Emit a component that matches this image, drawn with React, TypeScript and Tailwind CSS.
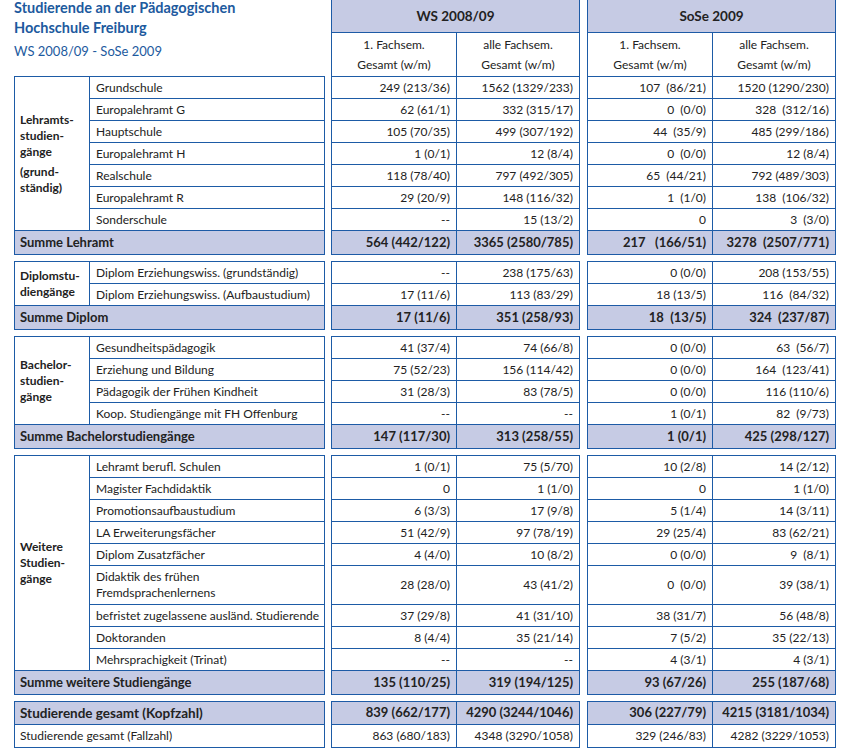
import React from 'react';

type Vals = [string, string, string, string];
type Row = { name: React.ReactNode; v: Vals; tall?: boolean };
type Block = { label: React.ReactNode; rows: Row[]; sum: { name: string; v: Vals } };

const blocks: Block[] = [
  {
    label: (
      <>
        <div>Lehramts-</div>
        <div>studien-</div>
        <div>gänge</div>
        <div className="mt-[4px]">(grund-</div>
        <div>ständig)</div>
      </>
    ),
    rows: [
      { name: 'Grundschule', v: ['249 (213/36)', '1562 (1329/233)', '107  (86/21)', '1520 (1290/230)'] },
      { name: 'Europalehramt G', v: ['62 (61/1)', '332 (315/17)', '0  (0/0)', '328  (312/16)'] },
      { name: 'Hauptschule', v: ['105 (70/35)', '499 (307/192)', '44  (35/9)', '485 (299/186)'] },
      { name: 'Europalehramt H', v: ['1 (0/1)', '12 (8/4)', '0  (0/0)', '12 (8/4)'] },
      { name: 'Realschule', v: ['118 (78/40)', '797 (492/305)', '65  (44/21)', '792 (489/303)'] },
      { name: 'Europalehramt R', v: ['29 (20/9)', '148 (116/32)', '1  (1/0)', '138  (106/32)'] },
      { name: 'Sonderschule', v: ['--', '15 (13/2)', '0', '3  (3/0)'] },
    ],
    sum: { name: 'Summe Lehramt', v: ['564 (442/122)', '3365 (2580/785)', '217   (166/51)', '3278  (2507/771)'] },
  },
  {
    label: (
      <>
        <div>Diplomstu-</div>
        <div>diengänge</div>
      </>
    ),
    rows: [
      { name: 'Diplom Erziehungswiss. (grundständig)', v: ['--', '238 (175/63)', '0 (0/0)', '208 (153/55)'] },
      { name: 'Diplom Erziehungswiss. (Aufbaustudium)', v: ['17 (11/6)', '113 (83/29)', '18 (13/5)', '116  (84/32)'] },
    ],
    sum: { name: 'Summe Diplom', v: ['17 (11/6)', '351 (258/93)', '18  (13/5)', '324  (237/87)'] },
  },
  {
    label: (
      <>
        <div>Bachelor-</div>
        <div>studien-</div>
        <div>gänge</div>
      </>
    ),
    rows: [
      { name: 'Gesundheitspädagogik', v: ['41 (37/4)', '74 (66/8)', '0 (0/0)', '63  (56/7)'] },
      { name: 'Erziehung und Bildung', v: ['75 (52/23)', '156 (114/42)', '0 (0/0)', '164  (123/41)'] },
      { name: 'Pädagogik der Frühen Kindheit', v: ['31 (28/3)', '83 (78/5)', '0 (0/0)', '116 (110/6)'] },
      { name: 'Koop. Studiengänge mit FH Offenburg', v: ['--', '--', '1 (0/1)', '82  (9/73)'] },
    ],
    sum: { name: 'Summe Bachelorstudiengänge', v: ['147 (117/30)', '313 (258/55)', '1 (0/1)', '425 (298/127)'] },
  },
  {
    label: (
      <>
        <div>Weitere</div>
        <div>Studien-</div>
        <div>gänge</div>
      </>
    ),
    rows: [
      { name: 'Lehramt berufl. Schulen', v: ['1 (0/1)', '75 (5/70)', '10 (2/8)', '14 (2/12)'] },
      { name: 'Magister Fachdidaktik', v: ['0', '1 (1/0)', '0', '1 (1/0)'] },
      { name: 'Promotionsaufbaustudium', v: ['6 (3/3)', '17 (9/8)', '5 (1/4)', '14 (3/11)'] },
      { name: 'LA Erweiterungsfächer', v: ['51 (42/9)', '97 (78/19)', '29 (25/4)', '83 (62/21)'] },
      { name: 'Diplom Zusatzfächer', v: ['4 (4/0)', '10 (8/2)', '0 (0/0)', '9  (8/1)'] },
      {
        name: (
          <>
            Didaktik des frühen
            <br />
            Fremdsprachenlernens
          </>
        ),
        v: ['28 (28/0)', '43 (41/2)', '0  (0/0)', '39 (38/1)'],
        tall: true,
      },
      { name: 'befristet zugelassene ausländ. Studierende', v: ['37 (29/8)', '41 (31/10)', '38 (31/7)', '56 (48/8)'] },
      { name: 'Doktoranden', v: ['8 (4/4)', '35 (21/14)', '7 (5/2)', '35 (22/13)'] },
      { name: 'Mehrsprachigkeit (Trinat)', v: ['--', '--', '4 (3/1)', '4 (3/1)'] },
    ],
    sum: { name: 'Summe weitere Studiengänge', v: ['135 (110/25)', '319 (194/125)', '93 (67/26)', '255 (187/68)'] },
  },
];

const rowH = (tall?: boolean) => (tall ? 'h-[39px]' : 'h-[22px]');

function NumCells({ a, b, bold, bg, h }: { a: string; b: string; bold?: boolean; bg?: boolean; h: string }) {
  return (
    <div className={`flex border-t border-[#1d5ba6] ${h} ${bg ? 'bg-[#c6cbe4]' : ''} ${bold ? 'font-bold text-[13px]' : ''}`}>
      <div className="w-[125px] border-r border-[#1d5ba6] flex items-center justify-end pr-[6px] whitespace-pre">{a}</div>
      <div className="flex-1 flex items-center justify-end pr-[6px] whitespace-pre">{b}</div>
    </div>
  );
}

function NumBox({ block, half, header }: { block: Block; half: 0 | 1; header?: React.ReactNode }) {
  const i = half * 2;
  return (
    <div className="w-[249px] border-x border-b border-[#1d5ba6]">
      {header}
      {block.rows.map((r, k) => (
        <NumCells key={k} a={r.v[i]} b={r.v[i + 1]} h={rowH(r.tall)} />
      ))}
      <NumCells a={block.sum.v[i]} b={block.sum.v[i + 1]} bold bg h="h-[24px]" />
    </div>
  );
}

function Header({ title }: { title: string }) {
  return (
    <>
      <div className="h-[32px] bg-[#c6cbe4] flex items-center justify-center font-bold text-[13.5px]">{title}</div>
      <div className="h-[44px] border-t border-[#1d5ba6] flex">
        <div className="w-[125px] border-r border-[#1d5ba6] flex flex-col items-center justify-center leading-[20px]">
          <div>1. Fachsem.</div>
          <div>Gesamt (w/m)</div>
        </div>
        <div className="flex-1 flex flex-col items-center justify-center leading-[20px]">
          <div>alle Fachsem.</div>
          <div>Gesamt (w/m)</div>
        </div>
      </div>
    </>
  );
}

function LeftBox({ block }: { block: Block }) {
  return (
    <div className="w-[311px] border-x border-b border-[#1d5ba6]">
      <div className="flex">
        <div className="w-[75px] border-t border-r border-[#1d5ba6] flex flex-col justify-center pl-[5px] font-bold leading-[16px]">
          {block.label}
        </div>
        <div className="flex-1 flex flex-col">
          {block.rows.map((r, k) => (
            <div
              key={k}
              className={`${rowH(r.tall)} border-t border-[#1d5ba6] flex items-center pl-[6px] ${r.tall ? 'leading-[16px]' : ''}`}
            >
              <div>{r.name}</div>
            </div>
          ))}
        </div>
      </div>
      <div className="h-[24px] border-t border-[#1d5ba6] bg-[#c6cbe4] flex items-center pl-[5px] font-bold text-[13px]">
        {block.sum.name}
      </div>
    </div>
  );
}

export default function App() {
  return (
    <div
      className="w-[852px] h-[755px] overflow-hidden bg-white text-[#222] text-[12px] pl-[14px]"
      style={{ fontFamily: 'Lato, "Open Sans", sans-serif' }}
    >
      {/* top: title + period headers */}
      <div className="flex flex-col gap-[6px]">
        {blocks.map((b, k) => (
          <div key={k} className="flex">
            <div className="flex flex-col">
              {k === 0 && (
                <div className="h-[76px] text-[#1d5a9e]">
                  <div className="-mt-[2px] font-bold text-[14.5px] leading-[20px]">
                    Studierende an der Pädagogischen
                    <br />
                    Hochschule Freiburg
                  </div>
                  <div className="mt-[3px] text-[13px] leading-[20px]">WS 2008/09 - SoSe 2009</div>
                </div>
              )}
              <LeftBox block={b} />
            </div>
            <div className="ml-[6px]">
              <NumBox block={b} half={0} header={k === 0 ? <Header title="WS 2008/09" /> : undefined} />
            </div>
            <div className="ml-[7px]">
              <NumBox block={b} half={1} header={k === 0 ? <Header title="SoSe 2009" /> : undefined} />
            </div>
          </div>
        ))}

        {/* totals */}
        <div className="flex">
          <div className="w-[311px] border-x border-b border-[#1d5ba6]">
            <div className="h-[23px] border-t border-[#1d5ba6] bg-[#c6cbe4] flex items-center pl-[5px] font-bold text-[13.5px]">
              Studierende gesamt (Kopfzahl)
            </div>
            <div className="h-[23px] border-t border-[#1d5ba6] flex items-center pl-[5px]">Studierende gesamt (Fallzahl)</div>
          </div>
          {[0, 2].map((i) => (
            <div key={i} className={`w-[249px] border-x border-b border-[#1d5ba6] ${i === 0 ? 'ml-[6px]' : 'ml-[7px]'}`}>
              <NumCells
                a={['839 (662/177)', '', '306 (227/79)'][i]}
                b={['4290 (3244/1046)', '', '4215 (3181/1034)'][i]}
                bold
                bg
                h="h-[23px]"
              />
              <NumCells
                a={['863 (680/183)', '', '329 (246/83)'][i]}
                b={['4348 (3290/1058)', '', '4282 (3229/1053)'][i]}
                h="h-[23px]"
              />
            </div>
          ))}
        </div>
      </div>
    </div>
  );
}
